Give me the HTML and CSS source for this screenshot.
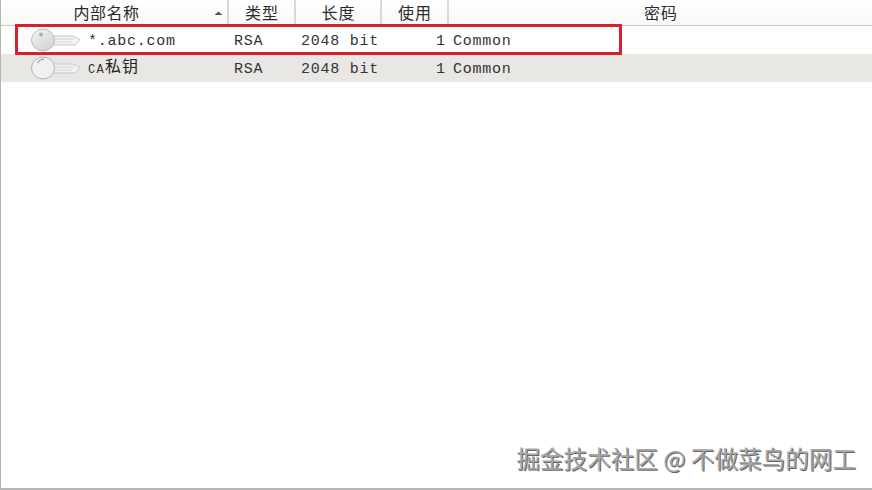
FILE: index.html
```html
<!DOCTYPE html>
<html lang="zh">
<head>
<meta charset="utf-8">
<title>密钥列表</title>
<link rel="stylesheet" href="styles.css">
</head>
<body>
<div class="window">
  <div class="header">
    <div class="hcell c-name"><span class="hname">内部名称</span><svg class="sort" width="9" height="5" viewBox="0 0 9 5"><path d="M4.5 0.5 L8.5 4 H0.5 Z" fill="#555"/></svg></div>
    <div class="hcell c-type">类型</div>
    <div class="hcell c-len">长度</div>
    <div class="hcell c-use">使用</div>
    <div class="hcell c-pass">密码</div>
  </div>
  <div class="row">
    <div class="c-icon"><svg width="52" height="24" viewBox="0 0 52 24"><defs><linearGradient id="k1" x1="0" y1="0" x2="0.7" y2="1"><stop offset="0" stop-color="#f4f4f4"/><stop offset="1" stop-color="#d2d2d2"/></linearGradient></defs><path d="M22 8 H43 L50 11.5 L45 17 H22 Z" fill="#f4f4f4" stroke="#c6c6c6"/><path d="M24 11 H44 M24 14 H41" stroke="#d4d4d4" fill="none"/><ellipse cx="13" cy="12" rx="11.5" ry="11" fill="url(#k1)" stroke="#bcbcbc"/><circle cx="11" cy="6.5" r="2" fill="#adadad"/></svg></div>
    <div class="c-text name">*.abc.com</div>
    <div class="c-text type">RSA</div>
    <div class="c-text len">2048 bit</div>
    <div class="c-text use">1</div>
    <div class="c-text pass">Common</div>
  </div>
  <div class="row alt">
    <div class="c-icon"><svg width="52" height="24" viewBox="0 0 52 24"><path d="M22 8 H43 L50 11.5 L45 17 H22 Z" fill="#f2f2f2" stroke="#c6c6c6"/><path d="M24 11 H44 M24 14 H41" stroke="#d4d4d4" fill="none"/><ellipse cx="13" cy="12" rx="11.5" ry="11" fill="#f0f0ee" stroke="#b4b4b4"/><path d="M8 7 A5 5 0 0 1 14 3.5" stroke="#a0a0a0" stroke-width="1.4" fill="none"/></svg></div>
    <div class="c-text name"><span class="ca">CA</span><span class="cjk">私钥</span></div>
    <div class="c-text type">RSA</div>
    <div class="c-text len">2048 bit</div>
    <div class="c-text use">1</div>
    <div class="c-text pass">Common</div>
  </div>
  <div class="highlight"></div>
  <div class="watermark">掘金技术社区 @ 不做菜鸟的网工</div>
</div>
</body>
</html>
```
FILE: styles.css
```css
html, body { margin: 0; padding: 0; background: #fff; }
.window {
  position: relative;
  box-sizing: border-box;
  width: 872px;
  height: 490px;
  background: #fff;
  border-left: 1px solid #b5b5b5;
  border-bottom: 2px solid #b5b5b5;
  overflow: hidden;
}
.header {
  display: flex;
  height: 26px;
  box-sizing: border-box;
  border-bottom: 1px solid #c9c9c9;
  background: linear-gradient(#ffffff, #f7f7f5);
  font-family: "Noto Sans CJK SC", sans-serif;
  font-size: 16px;
  line-height: 24px;
  letter-spacing: 1px;
  color: #2a2a2a;
}
.hcell {
  box-sizing: border-box;
  display: flex;
  align-items: flex-start;
  justify-content: center;
  height: 25px;
  padding-left: 1px;
  border-right: 2px solid #d8d8d6;
}
.hcell.c-pass { border-right: none; flex: 1; }
.c-name { width: 228px; position: relative; }
.hname { margin-right: 16px; letter-spacing: 0.5px; }
.sort { position: absolute; right: 4px; top: 11px; }
.c-type { width: 67px; }
.c-len { width: 86px; }
.c-use { width: 67px; }
.row {
  display: flex;
  align-items: center;
  height: 28px;
  font-family: "Liberation Mono", monospace;
  font-size: 15px;
  letter-spacing: 0.75px;
  color: #333;
}
.alt { background: #e8e7e3; }
.c-icon { width: 87px; display: flex; padding-left: 29px; box-sizing: border-box; }
.c-text { white-space: nowrap; line-height: 20px; margin-top: 4px; }
.name { width: 146px; }
.type { width: 67px; }
.len { width: 135px; }
.use { width: 17px; }
.ca { font-size: 12px; letter-spacing: 1.3px; position: relative; top: -2px; }
.cjk { font-family: "Noto Sans CJK SC", sans-serif; font-size: 16px; letter-spacing: 1px; color: #222; position: relative; top: -3px; }
.highlight {
  position: absolute;
  left: 14px;
  top: 24px;
  width: 607px;
  height: 31px;
  box-sizing: border-box;
  border: 3px solid #d9202c;
}
.watermark {
  position: absolute;
  right: 16px;
  bottom: 16px;
  font-family: "Noto Sans CJK SC", sans-serif;
  font-size: 23.6px;
  line-height: 28px;
  color: #a6a6a6;
  text-shadow: 1px 1px 0 #666;
  white-space: nowrap;
}
```
